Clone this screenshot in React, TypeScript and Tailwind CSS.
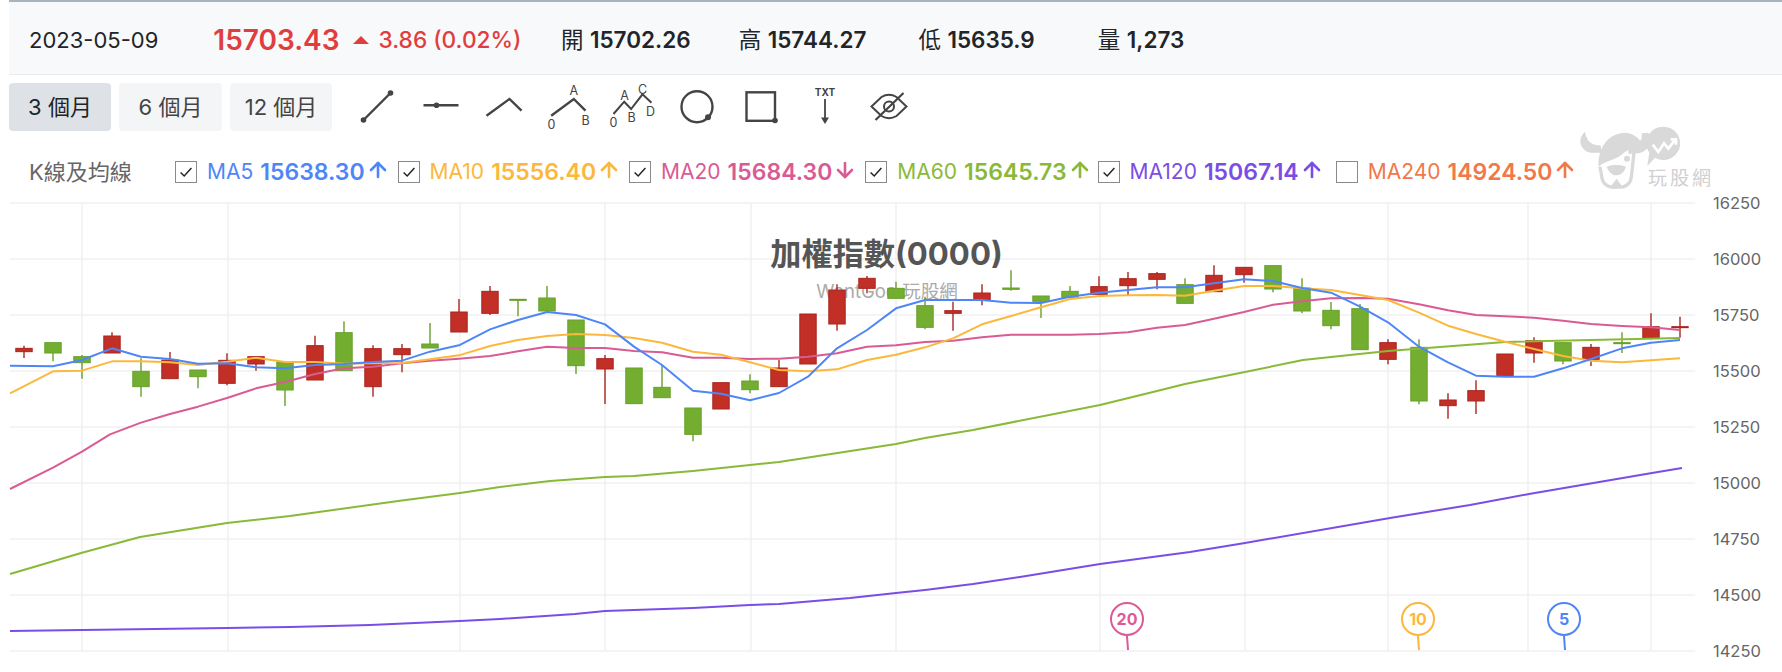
import { ArrowDown, ArrowUp } from "lucide-react";

const cjk = "font-['Inter','Noto_Sans_CJK_TC',sans-serif]";

// y values below are thirds of a pixel above the y=200 line, as read off the chart
const toY = (z: number) => 200 + z / 3;

// x, high, body top, body bottom, low, rising
type Candle = [number, number, number, number, number, boolean];
const candles: Candle[] = [
  [24, 437, 445, 455, 474, true],
  [53, 428, 428, 459, 484, false],
  [82, 465, 470, 488, 536, false],
  [112, 397, 408, 459, 459, true],
  [141, 475, 514, 560, 590, false],
  [170, 456, 480, 536, 536, true],
  [198, 510, 510, 530, 565, false],
  [227, 460, 481, 550, 556, true],
  [256, 470, 470, 492, 512, true],
  [285, 486, 486, 570, 618, false],
  [315, 407, 437, 540, 540, true],
  [344, 364, 398, 512, 512, false],
  [373, 436, 446, 560, 590, true],
  [402, 432, 446, 464, 517, true],
  [430, 369, 432, 444, 444, false],
  [459, 297, 336, 396, 396, true],
  [490, 258, 274, 340, 345, true],
  [518, 298, 298, 300, 349, false],
  [547, 258, 294, 333, 333, false],
  [576, 360, 360, 497, 522, false],
  [605, 465, 476, 507, 612, true],
  [634, 504, 504, 611, 611, false],
  [662, 495, 562, 593, 593, false],
  [693, 624, 624, 703, 724, false],
  [721, 548, 548, 627, 627, true],
  [750, 523, 543, 569, 580, false],
  [779, 480, 504, 560, 560, true],
  [808, 342, 342, 492, 492, true],
  [837, 253, 270, 372, 392, true],
  [867, 228, 235, 265, 280, true],
  [896, 245, 265, 295, 295, false],
  [925, 290, 317, 382, 388, false],
  [953, 305, 332, 340, 392, true],
  [982, 253, 279, 299, 316, true],
  [1011, 211, 264, 268, 272, false],
  [1041, 288, 288, 304, 354, false],
  [1070, 258, 274, 292, 292, false],
  [1099, 229, 260, 283, 283, true],
  [1128, 216, 236, 257, 285, true],
  [1157, 216, 221, 238, 268, true],
  [1185, 235, 254, 310, 310, false],
  [1214, 196, 226, 275, 275, true],
  [1244, 202, 202, 224, 248, true],
  [1273, 197, 197, 267, 277, false],
  [1302, 235, 264, 333, 340, false],
  [1331, 306, 331, 377, 388, false],
  [1360, 312, 326, 449, 449, false],
  [1388, 418, 428, 478, 493, true],
  [1419, 418, 442, 603, 613, false],
  [1448, 580, 600, 617, 656, true],
  [1476, 541, 572, 603, 642, true],
  [1505, 462, 462, 528, 528, true],
  [1534, 412, 422, 459, 488, true],
  [1563, 428, 428, 483, 493, false],
  [1591, 432, 442, 478, 498, true],
  [1622, 397, 428, 431, 459, false],
  [1651, 340, 380, 415, 415, true],
  [1680, 350, 380, 383, 413, true],
];

const ma5 = "10,497 53,499 82,480 112,445 141,470 170,477 198,491 227,490 256,502 285,505 315,495 344,492 373,486 402,482 430,455 459,436 490,388 518,360 547,336 576,345 605,373 634,440 662,495 693,572 721,581 750,601 779,579 808,530 837,445 867,390 896,325 925,300 953,300 982,300 1011,308 1041,309 1070,290 1099,278 1128,270 1157,262 1185,262 1214,250 1244,238 1273,243 1302,264 1331,278 1360,320 1388,367 1419,440 1448,487 1476,527 1505,530 1534,530 1563,505 1591,477 1622,445 1651,428 1680,420";
const ma10 = "10,580 53,514 82,512 112,484 141,484 170,487 198,495 227,485 256,473 285,486 315,486 344,491 373,490 402,489 430,478 459,466 490,438 518,420 547,408 576,402 605,405 634,414 662,428 693,455 721,464 750,487 779,510 808,514 837,508 867,480 896,464 925,442 953,415 982,373 1011,348 1041,322 1070,297 1099,288 1128,286 1157,285 1185,287 1214,272 1244,258 1273,258 1302,265 1331,270 1360,285 1388,300 1419,338 1448,377 1476,402 1505,425 1534,447 1563,468 1591,482 1622,487 1651,481 1680,475";
const ma20 = "10,867 53,803 82,755 110,703 141,668 170,642 198,620 227,594 256,565 285,546 315,522 344,505 373,500 402,490 430,482 459,476 490,468 518,454 547,440 576,444 605,444 634,453 662,457 693,473 721,473 750,477 779,476 808,470 837,460 867,440 896,436 925,426 953,422 982,412 1011,404 1041,404 1070,404 1099,402 1128,397 1157,383 1185,375 1214,356 1244,336 1273,314 1302,304 1331,295 1360,294 1388,296 1419,313 1448,331 1476,345 1505,349 1534,353 1563,362 1591,372 1622,378 1651,382 1680,390";

const toPoints = (raw: string) =>
  raw
    .split(" ")
    .map((p) => {
      const [x, z] = p.split(",").map(Number);
      return `${x},${toY(z)}`;
    })
    .join(" ");

const ma60 = "10,574 82,552.7 140,537 227,523 290,516 400,500.7 460,493 500,487 550,481 605,477 634,476 693,471 750,465 779,462 896,444 925,438 973,430 1100,405 1157,391 1185,384 1245,372 1303,360 1331,357 1388,351 1505,342 1680,338";
const ma120 = "10,631 82,630 227,628 290,627 370,625 460,621 500,619 575,614 605,611 634,610 693,608 750,605 779,604 850,598 896,593 925,590 973,584 1020,577 1100,564 1190,552 1245,543 1390,518 1470,505 1529,494 1652,473 1682,468";

const gridY = [203, 259, 315, 371, 427, 483, 539, 595, 651];
const gridX = [82, 228, 460, 605, 751, 896, 1100, 1245, 1388, 1528, 1651];
const axis = [16250, 16000, 15750, 15500, 15250, 15000, 14750, 14500, 14250];

const pins = [
  { x: 1127, label: "20", color: "#dc5a96" },
  { x: 1418, label: "10", color: "#fbb83c" },
  { x: 1564, label: "5", color: "#4f86f7" },
];

const legend = [
  { name: "MA5", value: "15638.30", text: "text-[#4f86f7] mr-[8px]", up: true, on: true },
  { name: "MA10", value: "15556.40", text: "text-[#fbb83c] mr-[8px]", up: true, on: true },
  { name: "MA20", value: "15684.30", text: "text-[#d95b94] mr-[8px]", up: false, on: true },
  { name: "MA60", value: "15645.73", text: "text-[#8ab938] mr-[6px]", up: true, on: true },
  { name: "MA120", value: "15067.14", text: "text-[#7a4ee6] mr-[12px]", up: true, on: true },
  { name: "MA240", value: "14924.50", text: "text-[#f0784a] mr-[8px]", up: true, on: false },
];

const Tool = ({ cx, children }: { cx: number; children: React.ReactNode }) => (
  <svg
    viewBox={`${cx - 32} 83 64 48`}
    className="w-16 h-12 shrink-0 overflow-visible"
    fill="none"
    stroke="#444"
    strokeWidth="2.4"
  >
    {children}
  </svg>
);

const Tag = ({ x, y, children }: { x: number; y: number; children: string }) => (
  <text x={x} y={y} fontSize="12.5" fill="#444" stroke="none" textAnchor="middle" dominantBaseline="central" fontFamily="Inter">
    {children}
  </text>
);

const Stat = ({ label, value, className }: { label: string; value: string; className: string }) => (
  <div className={`flex items-center gap-[6.5px] text-[22.5px] text-[#212529] ${className}`}>
    <span>{label}</span>
    <span className="font-semibold">{value}</span>
  </div>
);

const Logo = () => (
  <div className="absolute left-[1560px] top-[110px] w-[170px] h-[90px]">
    <svg viewBox="0 0 510 270" className="w-full h-full">
      <g fill="#d9d9d9">
        <path d="M75 65C52 85 58 118 90 128L125 128L122 106C95 106 80 95 75 65Z" />
        <path d="M265 68C280 95 268 122 235 130L205 132L205 106C230 106 250 95 245 70Z" />
        <path d="M116 170C112 110 150 68 195 68C225 70 245 90 248 112C225 108 205 118 190 130C170 150 140 150 116 170Z" />
        <path d="M140 170C152 163 185 163 198 170C192 190 178 196 168 196C156 196 146 186 140 170Z" />
        <circle cx="201" cy="146" r="9" />
        <path d="M150 232L170 206L188 232Z" />
        <path d="M310 50A50 50 0 1 1 285 143L262 168L268 128A50 50 0 0 1 310 50Z" />
      </g>
      <path d="M120 170L126 205C130 226 150 234 170 231C192 234 210 226 214 202L222 126" fill="none" stroke="#d9d9d9" strokeWidth="10" />
      <path d="M278 104L295 126L312 100L325 116L346 88M332 88H348V104" fill="none" stroke="#fff" strokeWidth="8" />
    </svg>
    <span className={`absolute left-[88px] top-[59px] text-[19px] leading-none tracking-[3px] text-[#cfcfcf] ${cjk}`}>
      玩股網
    </span>
  </div>
);

const Chart = () => (
  <svg viewBox="0 190 1782 482" className="w-[1782px] h-[482px] -ml-[9px] block">
    {gridY.map((y) => (
      <line key={y} x1="10" x2="1695" y1={y} y2={y} stroke="#f0f0f0" strokeWidth="1.5" />
    ))}
    {gridX.map((x) => (
      <line key={x} x1={x} x2={x} y1="203" y2="651" stroke="#f0f0f0" strokeWidth="1.5" />
    ))}
    {axis.map((v, i) => (
      <text key={v} x="1713" y={gridY[i]} fontSize="16.5" fill="#666" dominantBaseline="central" fontFamily="Inter">
        {v}
      </text>
    ))}

    <text x="886.5" y="254" fontSize="31.2" fontWeight="700" fill="#555" textAnchor="middle" dominantBaseline="central" fontFamily="Inter, 'Noto Sans CJK TC', sans-serif">
      加權指數(0000)
    </text>
    <text x="887" y="291" fontSize="18.5" fill="#aaa" textAnchor="middle" dominantBaseline="central" fontFamily="Inter, 'Noto Sans CJK TC', sans-serif">
      WantGoo 玩股網
    </text>

    {candles.map(([x, high, top, bottom, low, up]) => {
      const fill = up ? "#c22f26" : "#74ae30";
      const edge = up ? "#a8261e" : "#66a02a";
      return (
        <g key={x}>
          <line x1={x} x2={x} y1={toY(high)} y2={toY(low)} stroke={edge} strokeWidth="1.4" />
          <rect x={x - 8.2} y={toY(top)} width="16.4" height={Math.max((bottom - top) / 3, 1)} fill={fill} stroke={edge} strokeWidth="1" />
        </g>
      );
    })}

    <g fill="none" strokeWidth="2" strokeLinejoin="round">
      <polyline points={ma120} stroke="#7a4ee6" />
      <polyline points={ma60} stroke="#8ab938" />
      <polyline points={toPoints(ma20)} stroke="#d95b94" />
      <polyline points={toPoints(ma10)} stroke="#fbb83c" />
      <polyline points={toPoints(ma5)} stroke="#4f86f7" />
    </g>

    {pins.map((p) => (
      <g key={p.label}>
        <line x1={p.x} x2={p.x + 1} y1="636" y2="650" stroke={p.color} strokeWidth="2" />
        <circle cx={p.x} cy="619" r="16" fill="#fff" stroke={p.color} strokeWidth="2" />
        <text x={p.x} y="619" fontSize="16" fontWeight="700" fill={p.color} textAnchor="middle" dominantBaseline="central" fontFamily="Inter">
          {p.label}
        </text>
      </g>
    ))}
  </svg>
);

export default function App() {
  return (
    <div className={`relative w-[1782px] h-[672px] overflow-hidden bg-white pl-[9px] ${cjk}`}>
      {/* quote bar */}
      <div className="h-[75px] flex items-center pl-[20px] pt-[3px] bg-[#f8f9fa] border-t-2 border-[#a9b2bd] shadow-[inset_0_-1px_0_#e9ecef]">
        <span className="text-[22px] text-[#212529]">2023-05-09</span>
        <span className="ml-[55px] text-[28px] font-semibold text-[#e03e3e]">15703.43</span>
        <span className="ml-[13px] w-0 h-0 border-x-8 border-x-transparent border-b-8 border-b-[#e03e3e]" />
        <span className="ml-[10px] text-[22.7px] font-medium text-[#e03e3e]">3.86 (0.02%)</span>
        <Stat label="開" value="15702.26" className="ml-[39.5px]" />
        <Stat label="高" value="15744.27" className="ml-[48px]" />
        <Stat label="低" value="15635.9" className="ml-[52px]" />
        <Stat label="量" value="1,273" className="ml-[63px]" />
      </div>

      {/* range buttons and drawing tools */}
      <div className="flex items-center h-[48px] mt-[8px]">
        <button className="w-[102px] h-12 rounded bg-[#dee2e6] text-[22px] text-[#212529]">3 個月</button>
        <button className="ml-[8px] w-[103px] h-12 rounded bg-[#f4f5f6] text-[22px] text-[#444]">6 個月</button>
        <button className="ml-[8px] w-[102px] h-12 rounded bg-[#f4f5f6] text-[22px] text-[#444]">12 個月</button>
        <div className="flex ml-[12.5px]">
          <Tool cx={376.5}>
            <path d="M363 120L390 93" />
            <circle cx="363" cy="120" r="2.8" fill="#444" stroke="none" />
            <circle cx="390" cy="93" r="2.8" fill="#444" stroke="none" />
          </Tool>
          <Tool cx={440.5}>
            <path d="M423 105.3H458" />
            <circle cx="436" cy="105.3" r="2.8" fill="#444" stroke="none" />
          </Tool>
          <Tool cx={504.5}>
            <path d="M486 115.7L509 99L521 110.7" />
          </Tool>
          <Tool cx={568.5}>
            <path d="M550.7 115.7L573.3 99L585 110.7" />
            <Tag x={573.3} y={90.5}>A</Tag>
            <Tag x={585} y={120}>B</Tag>
            <Tag x={551} y={124}>0</Tag>
          </Tool>
          <Tool cx={632.5}>
            <path d="M613 114L623.7 101.7L630.6 109L642 94.3L651 102.7" strokeWidth="2" />
            <Tag x={624} y={95}>A</Tag>
            <Tag x={631} y={117}>B</Tag>
            <Tag x={642} y={89.5}>C</Tag>
            <Tag x={650} y={111}>D</Tag>
            <Tag x={613} y={122}>0</Tag>
          </Tool>
          <Tool cx={696.5}>
            <circle cx="696.5" cy="106.7" r="15.5" />
            <circle cx="707.5" cy="117.3" r="3" fill="#444" stroke="none" />
          </Tool>
          <Tool cx={760.5}>
            <rect x="746" y="92.3" width="28.5" height="28.5" />
            <circle cx="774.5" cy="120.5" r="2.8" fill="#444" stroke="none" />
          </Tool>
          <Tool cx={824.5}>
            <text x="824.5" y="92" fontSize="10" fontWeight="700" fill="#444" stroke="none" textAnchor="middle" dominantBaseline="central" fontFamily="Inter">
              TXT
            </text>
            <path d="M824.5 99V119" strokeWidth="1.8" />
            <path d="M820.5 117.5H828.5L824.5 124Z" fill="#444" stroke="none" />
          </Tool>
          <Tool cx={888.5}>
            <path d="M871 106.5L881 97C886 94 891 94 896 97L906 106.5L896 116C891 119 886 119 881 116Z" strokeWidth="2" />
            <circle cx="888.5" cy="106.5" r="5" strokeWidth="2" />
            <path d="M903 93L875 120" strokeWidth="2.2" stroke="#444" />
          </Tool>
        </div>
      </div>

      {/* K line legend */}
      <div className="flex items-center h-[59px] pt-[23px] pl-[20px]">
        <span className="w-[146px] shrink-0 text-[22px] text-[#666]">K線及均線</span>
        {legend.map((m) => (
          <div key={m.name} className={`flex items-center ${m.text}`}>
            <span className="w-[22px] h-[22px] flex items-center justify-center border border-[#8a8a8a] bg-white">
              {m.on && (
                <svg viewBox="0 0 20 20" className="w-[18px] h-[18px]" fill="none" stroke="#222" strokeWidth="1.6">
                  <path d="M4 10.5L8 14.5L16 5.5" />
                </svg>
              )}
            </span>
            <span className="ml-[10px] text-[21px]">{m.name}</span>
            <span className="ml-[7px] text-[23px] font-semibold">{m.value}</span>
            {m.up ? (
              <ArrowUp className="ml-px mb-[5px] w-6 h-6" strokeWidth={2.6} />
            ) : (
              <ArrowDown className="ml-px mb-[5px] w-6 h-6" strokeWidth={2.6} />
            )}
          </div>
        ))}
      </div>

      <Logo />
      <Chart />
    </div>
  );
}
